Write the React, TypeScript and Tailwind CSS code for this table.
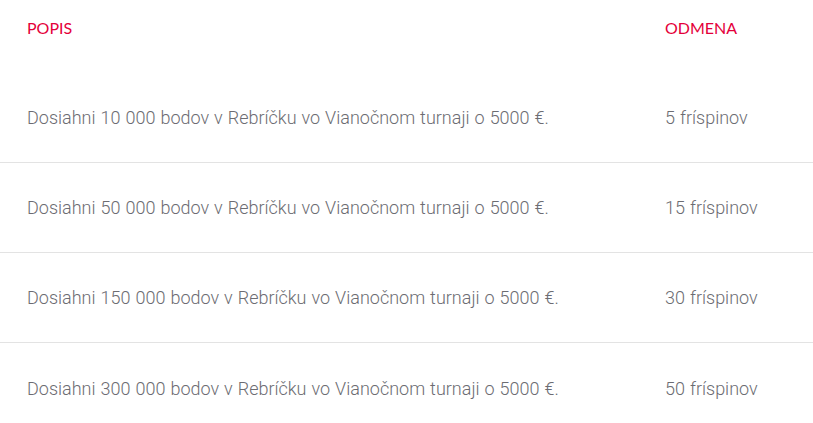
import React from "react";

const rows = [
  { d: "Dosiahni 10 000 bodov v Rebríčku vo Vianočnom turnaji o 5000 €.", r: "5 fríspinov" },
  { d: "Dosiahni 50 000 bodov v Rebríčku vo Vianočnom turnaji o 5000 €.", r: "15 fríspinov" },
  { d: "Dosiahni 150 000 bodov v Rebríčku vo Vianočnom turnaji o 5000 €.", r: "30 fríspinov" },
  { d: "Dosiahni 300 000 bodov v Rebríčku vo Vianočnom turnaji o 5000 €.", r: "50 fríspinov" },
];

export default function App() {
  return (
    <div className="w-[813px] h-[423px] bg-white overflow-hidden" style={{ fontFamily: "Lato, 'Noto Sans', sans-serif" }}>
      <div className="flex h-[73px] pt-[16px] text-[16px] text-[#e4003a]">
        <div className="w-[665px] pl-[27px]">POPIS</div>
        <div>ODMENA</div>
      </div>
      {rows.map((row, i) => (
        <div key={i} className={`flex items-center h-[90px] text-[18px] text-[#6c6c72] font-light [font-family:Roboto,sans-serif] [word-spacing:0.6px] ${i < rows.length - 1 ? "border-b border-[#e3e3e3]" : ""}`}>
          <div className="w-[665px] pl-[27px]">{row.d}</div>
          <div>{row.r}</div>
        </div>
      ))}
    </div>
  );
}
